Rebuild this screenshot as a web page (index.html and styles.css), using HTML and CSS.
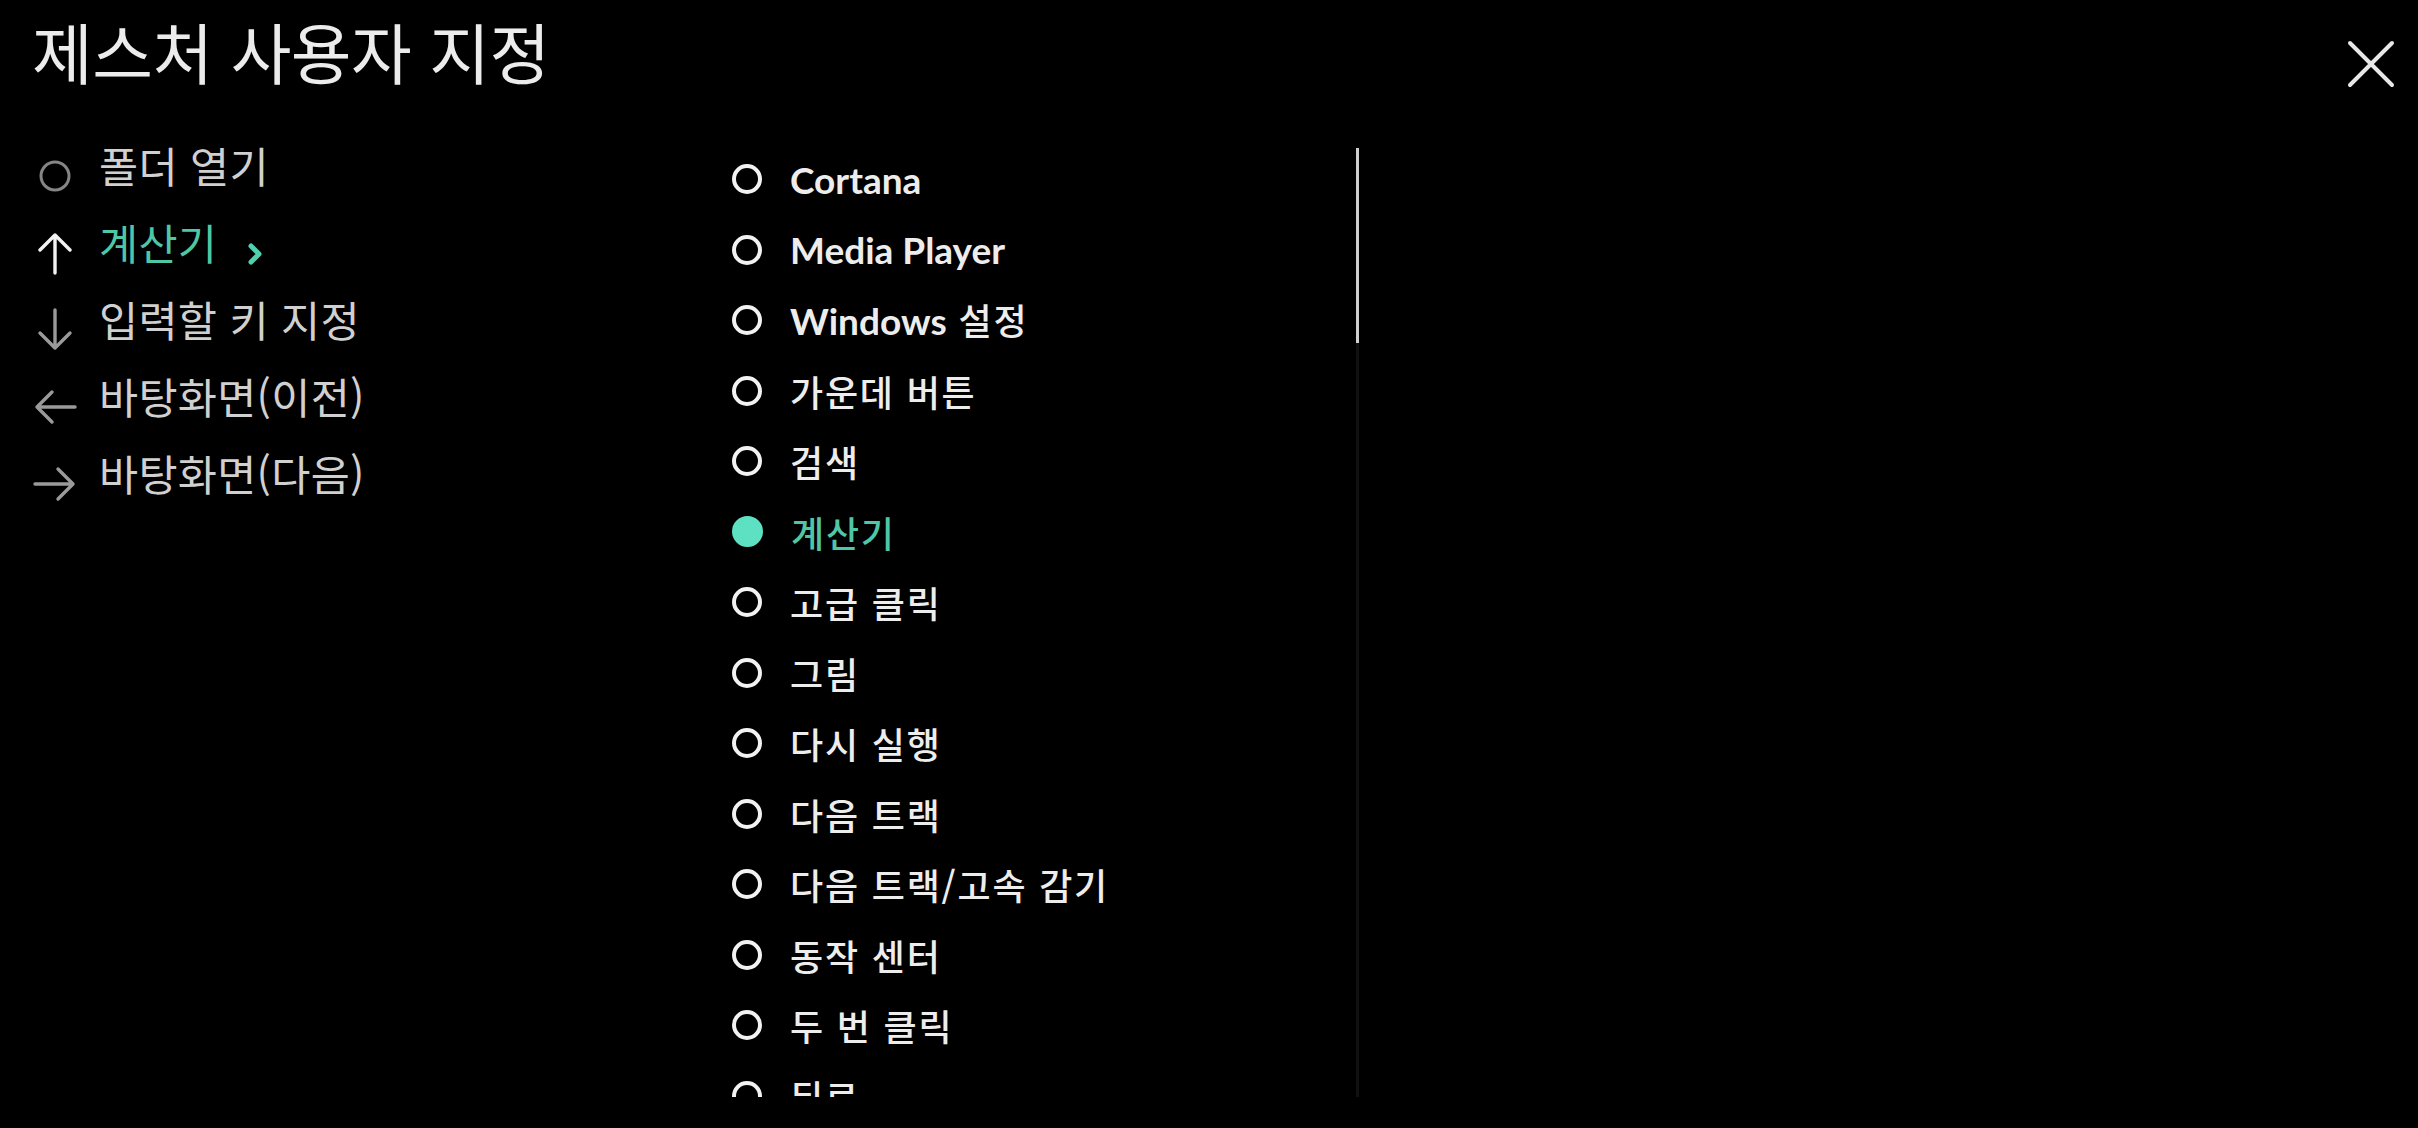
FILE: index.html
```html
<!DOCTYPE html>
<html lang="ko">
<head>
<meta charset="utf-8">
<title>제스처 사용자 지정</title>
<link rel="stylesheet" href="styles.css">
</head>
<body>
<div class="page">
  <header class="top">
    <h1 class="title">제스처 사용자 지정</h1>
    <button class="close" aria-label="닫기">
      <svg viewBox="0 0 48 48" width="48" height="48"><path d="M3 3 L45 45 M45 3 L3 45" /></svg>
    </button>
  </header>
  <div class="content">
    <ul class="gestures">
      <li class="g-item">
        <span class="g-icon"><svg viewBox="0 0 40 40" width="40" height="40"><circle cx="20" cy="20" r="14" class="ring"/></svg></span>
        <span class="g-label">폴더 열기</span>
      </li>
      <li class="g-item is-active">
        <span class="g-icon"><svg viewBox="0 0 40 44" width="40" height="44"><path d="M20 42 V4 M5 19 L20 4 L35 19" /></svg></span>
        <span class="g-label">계산기</span>
        <span class="chev"><svg viewBox="0 0 16 22" width="16" height="22"><path d="M4 3 L12 11 L4 19" /></svg></span>
      </li>
      <li class="g-item">
        <span class="g-icon"><svg viewBox="0 0 40 44" width="40" height="44"><path d="M20 2 V40 M5 25 L20 40 L35 25" /></svg></span>
        <span class="g-label">입력할 키 지정</span>
      </li>
      <li class="g-item">
        <span class="g-icon"><svg viewBox="0 0 44 40" width="44" height="40"><path d="M42 20 H4 M19 5 L4 20 L19 35" /></svg></span>
        <span class="g-label">바탕화면(이전)</span>
      </li>
      <li class="g-item">
        <span class="g-icon"><svg viewBox="0 0 44 40" width="44" height="40"><path d="M2 20 H40 M25 5 L40 20 L25 35" /></svg></span>
        <span class="g-label">바탕화면(다음)</span>
      </li>
    </ul>
    <div class="actions-wrap">
      <ul class="actions">
        <li class="a-item"><span class="dot"></span><span class="a-label en">Cortana</span></li>
        <li class="a-item"><span class="dot"></span><span class="a-label en">Media Player</span></li>
        <li class="a-item"><span class="dot"></span><span class="a-label"><span class="en">Windows</span> 설정</span></li>
        <li class="a-item"><span class="dot"></span><span class="a-label">가운데 버튼</span></li>
        <li class="a-item"><span class="dot"></span><span class="a-label">검색</span></li>
        <li class="a-item is-selected"><span class="dot"></span><span class="a-label">계산기</span></li>
        <li class="a-item"><span class="dot"></span><span class="a-label">고급 클릭</span></li>
        <li class="a-item"><span class="dot"></span><span class="a-label">그림</span></li>
        <li class="a-item"><span class="dot"></span><span class="a-label">다시 실행</span></li>
        <li class="a-item"><span class="dot"></span><span class="a-label">다음 트랙</span></li>
        <li class="a-item"><span class="dot"></span><span class="a-label">다음 트랙/고속 감기</span></li>
        <li class="a-item"><span class="dot"></span><span class="a-label">동작 센터</span></li>
        <li class="a-item"><span class="dot"></span><span class="a-label">두 번 클릭</span></li>
        <li class="a-item"><span class="dot"></span><span class="a-label">뒤로</span></li>
      </ul>
    </div>
    <div class="scrollbar"><div class="thumb"></div></div>
  </div>
</div>
</body>
</html>
```

FILE: styles.css
```css
* { box-sizing: border-box; }
html, body {
  margin: 0;
  padding: 0;
  background: #000;
}
body {
  width: 2418px;
  height: 1128px;
  overflow: hidden;
  font-family: "Noto Sans CJK KR", "Noto Sans", sans-serif;
  color: #e6e6e6;
}
.page {
  display: flex;
  flex-direction: column;
  height: 1128px;
}
.top {
  display: flex;
  justify-content: space-between;
  align-items: flex-start;
  height: 127px;
  padding: 0 23px 0 32px;
}
.title {
  margin: 10px 0 0 0;
  font-size: 66px;
  line-height: 80px;
  font-weight: 400;
  color: #ececec;
  letter-spacing: -0.5px;
}
.close {
  margin-top: 40px;
  width: 48px;
  height: 48px;
  padding: 0;
  border: 0;
  background: none;
}
.close svg path {
  stroke: #e8e8e8;
  stroke-width: 4;
  stroke-linecap: round;
  fill: none;
}
.content {
  display: flex;
  align-items: flex-start;
  height: 1001px;
}
.gestures {
  list-style: none;
  margin: 0;
  padding: 0 0 0 33px;
  width: 732px;
  flex: none;
}
.g-item {
  display: flex;
  align-items: center;
  height: 77px;
  font-size: 42.5px;
  letter-spacing: 0.3px;
  color: #d0d0d0;
}
.g-icon {
  width: 44px;
  height: 44px;
  margin-top: 20px;
  margin-right: 22px;
  display: flex;
  align-items: center;
  justify-content: center;
  flex: none;
}
.g-icon svg path {
  stroke: #9a9a9a;
  stroke-width: 3.4;
  fill: none;
  stroke-linecap: round;
  stroke-linejoin: round;
}
.g-icon .ring {
  stroke: #858585;
  stroke-width: 3;
  fill: none;
}
.g-label {
  line-height: 1;
}
.g-item.is-active .g-label { color: #4fc7a6; }
.g-item.is-active .g-icon svg path { stroke: #f2f2f2; }
.chev {
  margin-left: 30px;
  margin-top: 22px;
  display: flex;
}
.chev svg path {
  stroke: #4fd1b0;
  stroke-width: 5;
  fill: none;
  stroke-linecap: round;
  stroke-linejoin: round;
}
.actions-wrap {
  width: 624px;
  height: 970px;
  overflow: hidden;
  padding-top: 17px;
  flex: none;
}
.actions {
  list-style: none;
  margin: 0;
  padding: 0;
}
.a-item {
  display: flex;
  align-items: center;
  height: 70.5px;
  font-size: 36px;
  font-weight: 500;
  color: #ededed;
}
.dot {
  width: 30px;
  height: 30px;
  border: 4.5px solid #f2f2f2;
  border-radius: 50%;
  margin-right: 28px;
  flex: none;
}
.a-label {
  line-height: 1;
  letter-spacing: 0.05em;
}
.en {
  font-family: "Lato", "Noto Sans", sans-serif;
  font-weight: 700;
  font-size: 37px;
  letter-spacing: 0;
}
.a-item.is-selected .dot {
  width: 31px;
  height: 31px;
  background: #5ee0c2;
  border-color: #5ee0c2;
}
.a-item.is-selected .a-label { color: #4fc7a6; }
.scrollbar {
  width: 3px;
  height: 949px;
  margin-top: 21px;
  background: #111;
  flex: none;
}
.thumb {
  width: 3px;
  height: 195px;
  background: #cfcfcf;
}
```
